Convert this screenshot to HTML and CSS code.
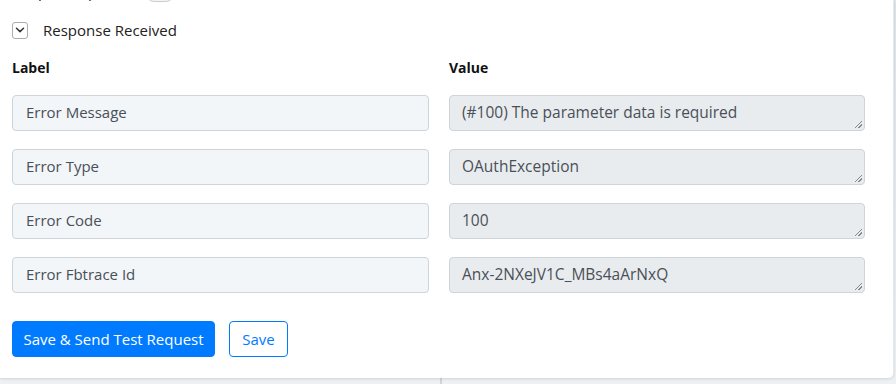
FILE: index.html
```html
<!DOCTYPE html>
<html lang="en">
<head>
  <meta charset="UTF-8">
  <title>Response</title>
  <link rel="stylesheet" href="styles.css">
</head>
<body>
  <div class="page">
    <div class="card">
      <div class="scroll">
        <div class="row-toggle">
          <span>Simple Response</span>
          <span class="switch"></span>
        </div>

        <div class="collapse-head">
          <span class="chev">
            <svg width="10" height="6" viewBox="0 0 10 6"><path d="M1.5 1.2 L5 4.6 L8.5 1.2" fill="none" stroke="#333" stroke-width="1.5" stroke-linecap="round" stroke-linejoin="round"/></svg>
          </span>
          <span>Response Received</span>
        </div>

        <div class="grid">
          <div class="head">Label</div>
          <div class="head">Value</div>

          <div class="field">Error Message</div>
          <div class="area">(#100) The parameter data is required</div>

          <div class="field">Error Type</div>
          <div class="area">OAuthException</div>

          <div class="field">Error Code</div>
          <div class="area">100</div>

          <div class="field">Error Fbtrace Id</div>
          <div class="area">Anx-2NXeJV1C_MBs4aArNxQ</div>
        </div>

        <div class="actions">
          <button class="btn btn-primary">Save &amp; Send Test Request</button>
          <button class="btn btn-outline">Save</button>
        </div>
      </div>
    </div>
    <div class="below">
      <div class="below-left"></div>
      <div class="below-right"></div>
    </div>
  </div>
</body>
</html>
```

FILE: styles.css
```css
body {
  margin: 0;
  font-family: "Open Sans", "Lato", sans-serif;
  color: #212529;
  background: #fff;
  overflow: hidden;
}

.page {
  height: 384px;
  display: flex;
  flex-direction: column;
  background: linear-gradient(#dfe4ea, #eef1f4);
}

.card {
  width: 893px;
  height: 378px;
  background: #fff;
  border-right: 1px solid #e4e7eb;
  border-bottom-right-radius: 5px;
  box-shadow: 0 1px 3px rgba(0, 0, 0, 0.12);
  overflow: hidden;
  position: relative;
  z-index: 1;
}

/* content is scrolled a little so the top row is cut */
.scroll {
  margin-top: -19px;
  padding: 0 28px 0 12px;
}

.row-toggle {
  display: flex;
  align-items: center;
  gap: 15px;
  height: 20px;
  font-size: 15px;
}

.switch {
  width: 26px;
  height: 14px;
  border: 1px solid #c9ced4;
  border-radius: 8px;
  background: #f1f3f5;
  margin-top: 5px;
}

.collapse-head {
  display: flex;
  align-items: center;
  gap: 15px;
  margin-top: 19px;
  font-size: 15px;
  color: #222;
}

.chev {
  width: 14px;
  height: 15px;
  border: 1px solid #a9adb2;
  border-radius: 3px;
  display: flex;
  align-items: center;
  justify-content: center;
}

.grid {
  display: grid;
  grid-template-columns: 417px 416px;
  column-gap: 20px;
  row-gap: 18px;
  margin-top: 18px;
}

.head {
  font-weight: bold;
  font-size: 14px;
  color: #111;
}

.field,
.area {
  box-sizing: border-box;
  height: 36px;
  border: 1px solid #ced4da;
  border-radius: 4px;
  font-size: 15px;
  color: #495057;
  display: flex;
  align-items: center;
  padding-bottom: 2px;
}

.field {
  background: #f3f6f9;
  padding-left: 13px;
}

.area {
  background: #e9ecef;
  padding-left: 12px;
  font-size: 15.5px;
  position: relative;
}

/* resize grip */
.area::after {
  content: "";
  position: absolute;
  right: 2px;
  bottom: 2px;
  width: 7px;
  height: 7px;
  background: linear-gradient(135deg, transparent 45%, #888 46%, #888 54%, transparent 55%, transparent 70%, #888 71%, #888 79%, transparent 80%);
}

.actions {
  display: flex;
  gap: 14px;
  margin-top: 28px;
}

.btn {
  font-family: inherit;
  font-size: 15px;
  height: 36px;
  border-radius: 4px;
  padding: 0 4px;
  cursor: pointer;
}

.btn-primary {
  background: #007bff;
  border: 1px solid #007bff;
  color: #fff;
  width: 203px;
}

.btn-outline {
  background: #fff;
  border: 1px solid #007bff;
  color: #007bff;
  width: 59px;
}

.below {
  flex: 1;
  display: flex;
}

.below-left {
  width: 440px;
  border-right: 2px solid #cfd4da;
}
```
